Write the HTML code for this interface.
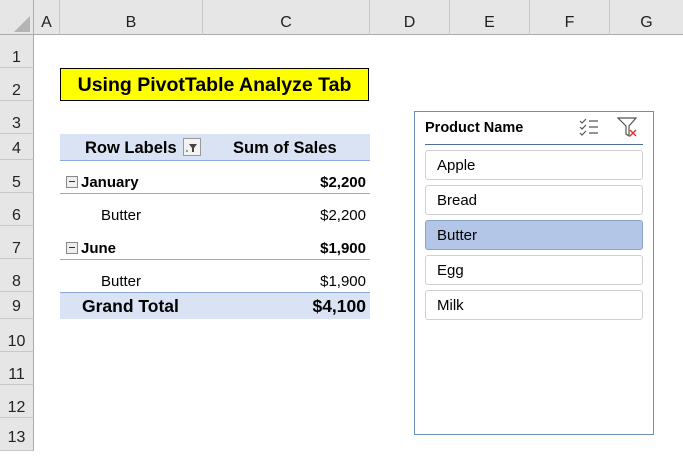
<!DOCTYPE html>
<html><head><style>
body{margin:0;width:683px;height:447px;overflow:hidden;background:#fff;font-family:"Liberation Sans",sans-serif;position:relative}
.a{position:absolute}
.ch{position:absolute;top:0;height:35px;background:#e6e6e6;border-bottom:1px solid #ababab;font-size:16px;color:#222;text-align:center;line-height:45px;box-sizing:border-box;border-right:1px solid #c8c8c8}
.rh{position:absolute;left:0;width:34px;background:#e6e6e6;border-bottom:1px solid #c8c8c8;border-right:1px solid #ababab;font-size:16px;color:#222;text-align:center;box-sizing:border-box}
.t{position:absolute;font-size:15px;color:#000;white-space:nowrap}
.b{font-weight:bold}
.r{text-align:right}
.item{position:absolute;left:425px;width:218px;height:30px;border:1px solid #d0d0d0;border-radius:3px;box-sizing:border-box;font-size:15px;line-height:30px;padding-left:11px}
.minus{display:inline-block;width:10px;height:10px;border:1px solid #888;background:#eee;position:relative;margin-right:3px;vertical-align:-1px}
.minus:after{content:"";position:absolute;left:2px;right:2px;top:4px;height:1px;background:#333}
</style></head><body>
<div class="a" style="left:0;top:0;width:683px;height:35px;background:#e6e6e6"></div>
<div class="ch" style="left:0;width:34px;border-right:1px solid #ababab"><svg width="34" height="35" style="position:absolute;left:0;top:0"><polygon points="14,32 30,32 30,16" fill="#b4b4b4"/></svg></div>
<div class="ch" style="left:34px;width:26px">A</div>
<div class="ch" style="left:60px;width:143px">B</div>
<div class="ch" style="left:203px;width:167px">C</div>
<div class="ch" style="left:370px;width:80px">D</div>
<div class="ch" style="left:450px;width:80px">E</div>
<div class="ch" style="left:530px;width:80px">F</div>
<div class="ch" style="left:610px;width:73px;border-right:none">G</div>

<div class="rh" style="top:35px;height:33px;line-height:46px">1</div>
<div class="rh" style="top:68px;height:33px;line-height:46px">2</div>
<div class="rh" style="top:101px;height:33px;line-height:46px">3</div>
<div class="rh" style="top:134px;height:26px;line-height:30px">4</div>
<div class="rh" style="top:160px;height:33px;line-height:46px">5</div>
<div class="rh" style="top:193px;height:33px;line-height:46px">6</div>
<div class="rh" style="top:226px;height:33px;line-height:46px">7</div>
<div class="rh" style="top:259px;height:33px;line-height:46px">8</div>
<div class="rh" style="top:292px;height:27px;line-height:30px">9</div>
<div class="rh" style="top:319px;height:33px;line-height:46px">10</div>
<div class="rh" style="top:352px;height:33px;line-height:46px">11</div>
<div class="rh" style="top:385px;height:33px;line-height:46px">12</div>
<div class="rh" style="top:418px;height:33px;line-height:40px">13</div>

<div class="a b" style="left:60px;top:68px;width:309px;height:33px;background:#ffff00;border:1px solid #000;box-sizing:border-box;text-align:center;line-height:33px;font-size:19.5px">Using PivotTable Analyze Tab</div>

<div class="a" style="left:60px;top:134px;width:310px;height:26px;background:#dae3f3;border-bottom:1px solid #8ea9db"></div>
<div class="t b" style="left:85px;top:139px;font-size:16.5px">Row Labels</div>
<div class="a" style="left:183px;top:138px;width:18px;height:18px;border:1px solid #999;background:#f3f3f3;box-sizing:border-box"><svg width="16" height="16"><path d="M5 5h8l-3 4v4h-2v-4z" fill="#444"/><path d="M3 11v2" stroke="#444"/></svg></div>
<div class="t b" style="left:233px;top:139px;font-size:16.5px">Sum of Sales</div>

<div class="t b" style="left:66px;top:174px"><span class="minus"></span>January</div>
<div class="t b r" style="left:250px;width:116px;top:174px">$2,200</div>
<div class="a" style="left:60px;top:193px;width:310px;height:1px;background:#8ea9db"></div>
<div class="t" style="left:101px;top:207px">Butter</div>
<div class="t r" style="left:250px;width:116px;top:207px">$2,200</div>
<div class="t b" style="left:66px;top:240px"><span class="minus"></span>June</div>
<div class="t b r" style="left:250px;width:116px;top:240px">$1,900</div>
<div class="a" style="left:60px;top:259px;width:310px;height:1px;background:#8ea9db"></div>
<div class="t" style="left:101px;top:273px">Butter</div>
<div class="t r" style="left:250px;width:116px;top:273px">$1,900</div>
<div class="a" style="left:60px;top:292px;width:310px;height:27px;background:#dae3f3;border-top:1px solid #8ea9db;box-sizing:border-box"></div>
<div class="t b" style="left:82px;top:296px;font-size:17.5px">Grand Total</div>
<div class="t b r" style="left:250px;width:116px;top:296px;font-size:17.5px">$4,100</div>

<div class="a" style="left:414px;top:111px;width:240px;height:324px;border:1px solid #6d8fb5;box-sizing:border-box;background:#fff"></div>
<div class="t b" style="left:425px;top:120px;font-size:14.5px">Product Name</div>
<svg class="a" style="left:578px;top:116px" width="24" height="22"><path d="M2 5l2 2 4-4M2 11l2 2 4-4M2 17l2 2 4-4" stroke="#555" fill="none" stroke-width="1.2"/><path d="M11 5h9M11 11h9M11 17h9" stroke="#555" stroke-width="1.3"/></svg>
<svg class="a" style="left:617px;top:116px" width="24" height="22"><path d="M1 2h18l-7 8v10l-3-2v-8z" stroke="#555" fill="none" stroke-width="1.2"/><path d="M13 14l6 6M19 14l-6 6" stroke="#e03030" stroke-width="1.4"/></svg>
<div class="a" style="left:425px;top:144px;width:218px;height:1px;background:#4a6f9a"></div>
<div class="item" style="top:150px">Apple</div>
<div class="item" style="top:185px">Bread</div>
<div class="item" style="top:220px;background:#b4c6e7;border-color:#8aa4c8">Butter</div>
<div class="item" style="top:255px">Egg</div>
<div class="item" style="top:290px">Milk</div>
</body></html>
